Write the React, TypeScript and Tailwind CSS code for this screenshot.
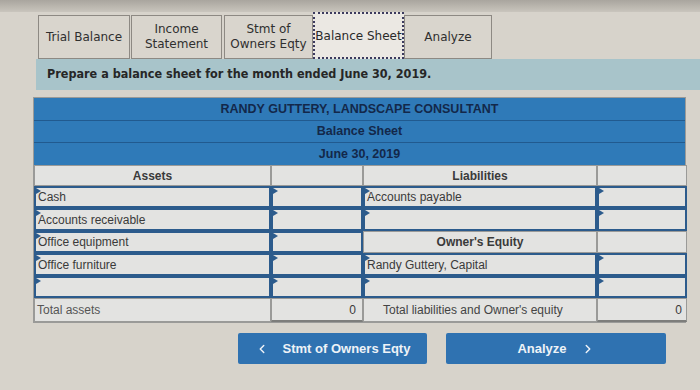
import { ChevronLeft, ChevronRight } from 'lucide-react';

const tabFont = { fontFamily: '"DejaVu Sans", Verdana, sans-serif' };

function Tab({ label, wide }: { label: string[]; wide?: string }) {
  return (
    <div className={`flex h-[44px] flex-col items-center justify-center border border-[#8d8983] bg-[#d9d5cd] text-[12px] leading-[15px] text-[#2f2f2f] ${wide}`}>
      {label.map((l) => (
        <span key={l}>{l}</span>
      ))}
    </div>
  );
}

function InputCell({ children, right }: { children?: React.ReactNode; right?: boolean }) {
  return (
    <div className={`relative flex items-center border-2 border-[#2c5b8c] bg-[#e3e3e1] px-[2px] text-[12px] text-[#3a3a3a] ${right ? 'justify-end' : ''}`}>
      <span className="absolute left-0 top-0 h-0 w-0 border-y-[3px] border-l-[5px] border-y-transparent border-l-[#2c5b8c]" />
      {children}
    </div>
  );
}

function PlainCell({ children, className = '' }: { children?: React.ReactNode; className?: string }) {
  return (
    <div className={`flex items-center border border-[#9a9a98] bg-[#e3e3e1] text-[12px] text-[#3a3a3a] ${className}`}>
      {children}
    </div>
  );
}

export default function App() {
  const cols = 'grid grid-cols-[237px_92px_234px_90px]';
  return (
    <div
      className="h-[390px] w-[700px] overflow-hidden bg-[#d7d3cb]"
      style={{ fontFamily: '"Liberation Sans", Arial, sans-serif' }}
    >
      {/* top strip */}
      <div className="h-[12px] bg-gradient-to-b from-[#a9a59e] to-[#c9c5bd]" />

      {/* Tabs */}
      <div className="ml-[38px] flex items-end" style={tabFont}>
        <Tab label={['Trial Balance']} wide="w-[92px]" />
        <Tab label={['Income', 'Statement']} wide="w-[91px] ml-[1px]" />
        <Tab label={['Stmt of', 'Owners Eqty']} wide="w-[89px] ml-[2px]" />
        <div className="flex h-[47px] w-[91px] items-center justify-center border-2 border-dotted border-[#3b3a5e] bg-[#ebe8e3] text-[12px] text-[#2a2a2a]">
          Balance Sheet
        </div>
        <div className="flex h-[44px] w-[88px] items-center justify-center border border-[#8d8983] bg-[#d9d5cd] text-[12px] text-[#2f2f2f]">
          Analyze
        </div>
      </div>

      {/* Instruction */}
      <div
        className="ml-[36px] flex h-[31px] items-center bg-[#a8c4ca] pl-[11px] text-[12.5px] font-bold text-[#262626]"
        style={{ fontFamily: '"DejaVu Sans Condensed", "DejaVu Sans", sans-serif' }}
      >
        Prepare a balance sheet for the month ended June 30, 2019.
      </div>

      {/* Table */}
      <div className="ml-[33px] mt-[7px] w-[653px] border border-[#9a9a98]">
        <div className="bg-[#2f7ab8] text-center text-[12.5px] font-bold text-[#13284a]">
          <div className="flex h-[23px] items-center justify-center border-b border-[#215a8f]">RANDY GUTTERY, LANDSCAPE CONSULTANT</div>
          <div className="flex h-[22px] items-center justify-center border-b border-[#215a8f]">Balance Sheet</div>
          <div className="flex h-[22px] items-center justify-center">June 30, 2019</div>
        </div>

        <div className={`${cols} h-[21px]`}>
          <PlainCell className="justify-center font-bold text-[#2a2a2a]">Assets</PlainCell>
          <PlainCell />
          <PlainCell className="justify-center font-bold text-[#2a2a2a]">Liabilities</PlainCell>
          <PlainCell />
        </div>

        <div className={`${cols} h-[22px]`}>
          <InputCell>Cash</InputCell>
          <InputCell />
          <InputCell>Accounts payable</InputCell>
          <InputCell />
        </div>
        <div className={`${cols} h-[23px]`}>
          <InputCell>Accounts receivable</InputCell>
          <InputCell />
          <InputCell />
          <InputCell />
        </div>
        <div className={`${cols} h-[22px]`}>
          <InputCell>Office equipment</InputCell>
          <InputCell />
          <PlainCell className="justify-center font-bold text-[#2a2a2a]">Owner's Equity</PlainCell>
          <PlainCell />
        </div>
        <div className={`${cols} h-[23px]`}>
          <InputCell>Office furniture</InputCell>
          <InputCell />
          <InputCell>Randy Guttery, Capital</InputCell>
          <InputCell />
        </div>
        <div className={`${cols} h-[22px]`}>
          <InputCell />
          <InputCell />
          <InputCell />
          <InputCell />
        </div>
        <div className={`${cols} h-[24px]`}>
          <PlainCell className="pl-[2px] text-[#555]">Total assets</PlainCell>
          <PlainCell className="justify-end border-b-2 border-b-[#7d7d7b] pr-[6px]">0</PlainCell>
          <PlainCell className="pl-[19px] text-[#444]">Total liabilities and Owner's equity</PlainCell>
          <PlainCell className="justify-end border-b-2 border-b-[#7d7d7b] pr-[4px]">0</PlainCell>
        </div>
      </div>

      {/* Nav buttons */}
      <div className="mt-[10px] flex">
        <button className="ml-[238px] flex h-[31px] w-[189px] items-center justify-center gap-[14px] rounded-[2px] bg-[#2f72b1] text-[13px] font-bold text-[#eef2f7]">
          <ChevronLeft className="h-[14px] w-[14px]" strokeWidth={2.5} />
          Stmt of Owners Eqty
        </button>
        <button className="ml-[19px] flex h-[31px] w-[220px] items-center justify-center gap-[14px] rounded-[2px] bg-[#2f72b1] text-[13px] font-bold text-[#eef2f7]">
          Analyze
          <ChevronRight className="h-[14px] w-[14px]" strokeWidth={2.5} />
        </button>
      </div>
    </div>
  );
}
